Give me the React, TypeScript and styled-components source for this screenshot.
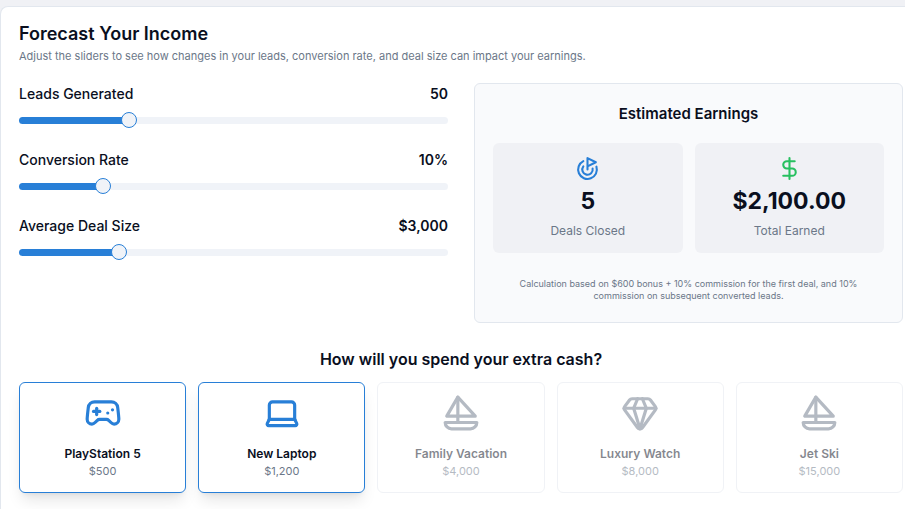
import React, { useId, useState } from "react";
import styled, { createGlobalStyle } from "styled-components";
import { DollarSign, Gamepad2, Gem, Goal, Laptop } from "lucide-react";

const color = {
  page: "#f0f1f5",
  surface: "#ffffff",
  text: "#0a0f1e",
  muted: "#6b7788",
  primary: "#287fd7",
  track: "#f0f3f8",
  tile: "#f0f1f5",
  panel: "#f9fafc",
  border: "#e2e7ee",
  success: "#27c060",
};

const GlobalStyle = createGlobalStyle`
  *, *::before, *::after { box-sizing: border-box; }
  body {
    margin: 0;
    background: ${color.page};
    color: ${color.text};
    font-family: Inter, "Liberation Sans", sans-serif;
    overflow-x: hidden;
  }
  h2, h3, p { margin: 0; }
`;

const Page = styled.main`
  padding-top: 6px;
`;

const Card = styled.section`
  min-height: calc(100vh - 6px);
  padding: 16px 2px 16px 18px;
  background: ${color.surface};
  border: 1px solid ${color.border};
  border-width: 1px 0 0 1px;
  border-radius: 8px 0 0 0;
`;

const Title = styled.h2`
  font-size: 18px;
  line-height: 22px;
  font-weight: 600;
`;

const Subtitle = styled.p`
  margin-top: 3px;
  font-size: 11px;
  line-height: 16px;
  color: ${color.muted};
`;

const Columns = styled.div`
  display: grid;
  grid-template-columns: 1fr 1fr;
  gap: 26px;
  margin-top: 19px;
`;

const SliderList = styled.div`
  display: flex;
  flex-direction: column;
  gap: 21px;
`;

const Field = styled.div`
  display: flex;
  flex-direction: column;
  gap: 7px;
`;

const FieldHeader = styled.div`
  display: flex;
  justify-content: space-between;
  font-size: 14px;
  line-height: 22px;
`;

const Label = styled.label`
  font-weight: 500;
`;

const Value = styled.output`
  font-weight: 600;
`;

const Range = styled.input`
  appearance: none;
  display: block;
  width: 100%;
  height: 16px;
  margin: 0;
  background: transparent;
  cursor: pointer;

  &::-webkit-slider-runnable-track {
    height: 7px;
    border-radius: 4px;
    background: linear-gradient(
      to right,
      ${color.primary} var(--fill),
      ${color.track} var(--fill)
    );
  }

  &::-webkit-slider-thumb {
    appearance: none;
    width: 16px;
    height: 16px;
    margin-top: -5px;
    border: 1px solid ${color.primary};
    border-radius: 50%;
    background: ${color.track};
  }
`;

const Summary = styled.section`
  display: flex;
  flex-direction: column;
  min-height: 240px;
  padding: 18px;
  background: ${color.panel};
  border: 1px solid ${color.border};
  border-radius: 6px;
  text-align: center;
`;

const SummaryTitle = styled.h3`
  font-size: 15px;
  line-height: 24px;
  font-weight: 600;
`;

const Tiles = styled.div`
  display: grid;
  grid-template-columns: 1fr 1fr;
  gap: 12px;
  margin-top: 17px;
`;

const Tile = styled.div`
  display: flex;
  flex-direction: column;
  align-items: center;
  padding: 13px 12px 12px;
  border-radius: 6px;
  background: ${color.tile};
`;

const TileValue = styled.p`
  margin-top: 5px;
  font-size: 23px;
  line-height: 30px;
  font-weight: 700;
`;

const TileLabel = styled.p`
  margin-top: 5px;
  font-size: 12px;
  line-height: 20px;
  color: ${color.muted};
`;

const Note = styled.p`
  margin-top: 25px;
  padding: 0 12px;
  font-size: 9px;
  line-height: 12px;
  color: ${color.muted};
`;

const RewardsTitle = styled.h3`
  margin-top: 24px;
  font-size: 16px;
  line-height: 24px;
  font-weight: 600;
  text-align: center;
`;

const Rewards = styled.div`
  display: grid;
  grid-template-columns: repeat(5, 1fr);
  gap: 12px;
  margin-top: 11px;
`;

const Reward = styled.button`
  display: flex;
  flex-direction: column;
  align-items: center;
  padding: 11px 8px 13px;
  background: ${color.surface};
  border: 1px solid ${color.primary};
  border-radius: 6px;
  box-shadow: 0 10px 15px -3px rgb(0 0 0 / 0.1), 0 4px 6px -4px rgb(0 0 0 / 0.1);
  color: ${color.primary};
  font-family: inherit;
  cursor: pointer;

  &:disabled {
    border-color: ${color.border};
    box-shadow: none;
    color: ${color.muted};
    opacity: 0.5;
    cursor: default;
  }
`;

const RewardName = styled.span`
  margin-top: 12px;
  font-size: 12px;
  line-height: 19px;
  font-weight: 600;
  color: ${color.text};
`;

const RewardPrice = styled.span`
  font-size: 11px;
  line-height: 16px;
  color: ${color.muted};
`;

function Sailboat({ size }: { size: number }) {
  return (
    <svg
      width={size}
      height={size}
      viewBox="0 0 24 24"
      fill="none"
      stroke="currentColor"
      strokeWidth="2"
      strokeLinecap="round"
      strokeLinejoin="round"
      aria-hidden="true"
    >
      <path d="M22 18H2a4 4 0 0 0 4 4h12a4 4 0 0 0 4-4Z" />
      <path d="M21 14 10 2 3 14h18Z" />
      <path d="M10 2v16" />
    </svg>
  );
}

interface SliderFieldProps {
  label: string;
  value: number;
  min: number;
  max: number;
  step: number;
  display: string;
  onChange: (value: number) => void;
}

function SliderField({ label, value, min, max, step, display, onChange }: SliderFieldProps) {
  const id = useId();
  const ratio = (value - min) / (max - min);
  const fill = `calc(8px + (100% - 16px) * ${ratio})`;
  return (
    <Field>
      <FieldHeader>
        <Label htmlFor={id}>{label}</Label>
        <Value htmlFor={id}>{display}</Value>
      </FieldHeader>
      <Range
        id={id}
        type="range"
        min={min}
        max={max}
        step={step}
        value={value}
        onChange={(event) => onChange(Number(event.target.value))}
        style={{ "--fill": fill } as React.CSSProperties}
      />
    </Field>
  );
}

const rewards = [
  { name: "PlayStation 5", price: 500, Icon: Gamepad2 },
  { name: "New Laptop", price: 1200, Icon: Laptop },
  { name: "Family Vacation", price: 4000, Icon: Sailboat },
  { name: "Luxury Watch", price: 8000, Icon: Gem },
  { name: "Jet Ski", price: 15000, Icon: Sailboat },
];

const dollars = (amount: number, digits = 0) =>
  "$" +
  amount.toLocaleString("en-US", {
    minimumFractionDigits: digits,
    maximumFractionDigits: digits,
  });

export default function App() {
  const [leads, setLeads] = useState(50);
  const [rate, setRate] = useState(10);
  const [dealSize, setDealSize] = useState(3000);

  const deals = Math.floor((leads * rate) / 100);
  const earned = deals > 0 ? 600 + deals * dealSize * 0.1 : 0;

  return (
    <>
      <GlobalStyle />
      <Page>
        <Card>
          <Title>Forecast Your Income</Title>
          <Subtitle>
            Adjust the sliders to see how changes in your leads, conversion rate, and deal size can
            impact your earnings.
          </Subtitle>
          <Columns>
            <SliderList>
              <SliderField
                label="Leads Generated"
                value={leads}
                min={1}
                max={200}
                step={1}
                display={String(leads)}
                onChange={setLeads}
              />
              <SliderField
                label="Conversion Rate"
                value={rate}
                min={1}
                max={50}
                step={1}
                display={`${rate}%`}
                onChange={setRate}
              />
              <SliderField
                label="Average Deal Size"
                value={dealSize}
                min={1000}
                max={10000}
                step={100}
                display={dollars(dealSize)}
                onChange={setDealSize}
              />
            </SliderList>
            <Summary>
              <SummaryTitle>Estimated Earnings</SummaryTitle>
              <Tiles>
                <Tile>
                  <Goal size={25} color={color.primary} />
                  <TileValue>{deals}</TileValue>
                  <TileLabel>Deals Closed</TileLabel>
                </Tile>
                <Tile>
                  <DollarSign size={25} color={color.success} />
                  <TileValue>{dollars(earned, 2)}</TileValue>
                  <TileLabel>Total Earned</TileLabel>
                </Tile>
              </Tiles>
              <Note>
                Calculation based on $600 bonus + 10% commission for the first deal, and 10%
                commission on subsequent converted leads.
              </Note>
            </Summary>
          </Columns>
          <RewardsTitle>How will you spend your extra cash?</RewardsTitle>
          <Rewards>
            {rewards.map(({ name, price, Icon }) => (
              <Reward key={name} type="button" disabled={earned < price}>
                <Icon size={38} />
                <RewardName>{name}</RewardName>
                <RewardPrice>{dollars(price)}</RewardPrice>
              </Reward>
            ))}
          </Rewards>
        </Card>
      </Page>
    </>
  );
}
